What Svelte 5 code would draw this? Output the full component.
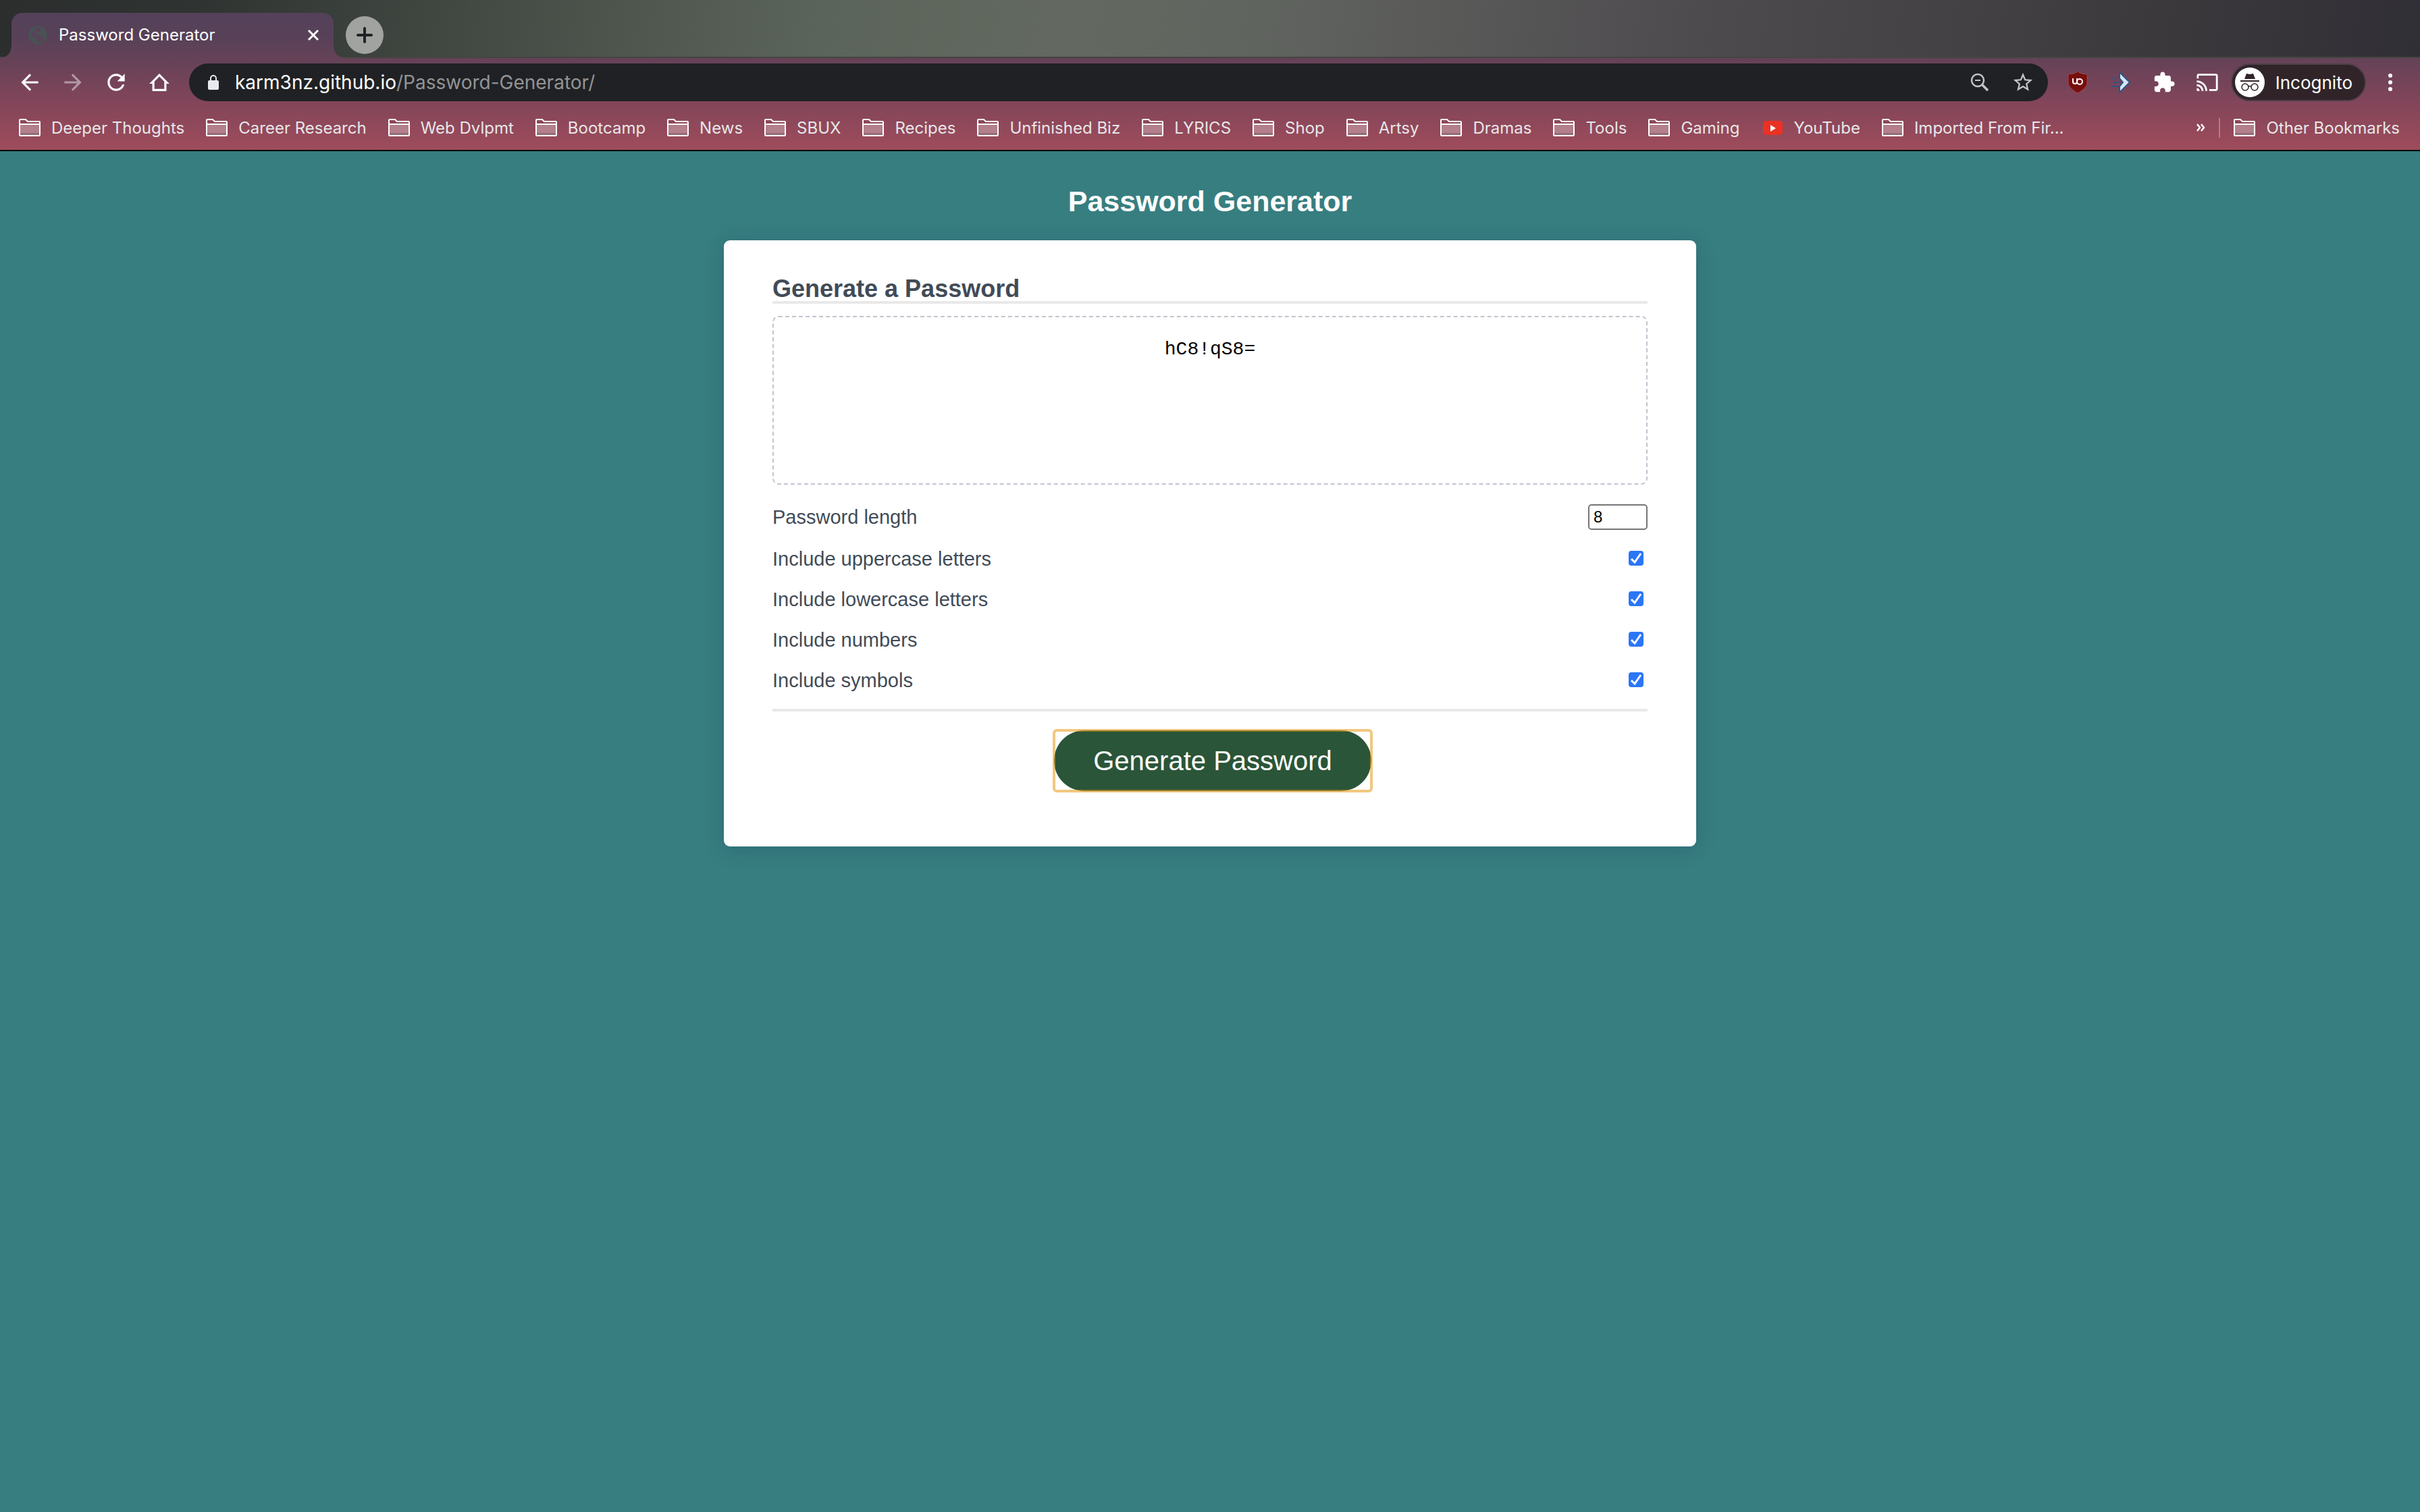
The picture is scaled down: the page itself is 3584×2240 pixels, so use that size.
<script>
  const folders = [
    'Deeper Thoughts', 'Career Research', 'Web Dvlpmt', 'Bootcamp', 'News', 'SBUX',
    'Recipes', 'Unfinished Biz', 'LYRICS', 'Shop', 'Artsy', 'Dramas', 'Tools', 'Gaming',
    'YouTube', 'Imported From Fir...'
  ];
  let options = $state([
    { id: 'uppercase', label: 'Include uppercase letters', on: true },
    { id: 'lowercase', label: 'Include lowercase letters', on: true },
    { id: 'numbers', label: 'Include numbers', on: true },
    { id: 'symbols', label: 'Include symbols', on: true }
  ]);
  let length = $state(8);
</script>

{#snippet folder()}
  <svg class="folder" viewBox="0 0 32 26" aria-hidden="true">
    <rect x="2" y="9" width="28" height="15" fill="#fff" opacity=".3" />
    <rect x="2" y="21" width="28" height="3" fill="#6b5560" opacity=".45" />
    <path d="M1 24V2a1 1 0 0 1 1-1h8l3 3h17a1 1 0 0 1 1 1v19a1 1 0 0 1-1 1H2a1 1 0 0 1-1-1zM1 8h30" fill="none" stroke="#fff" stroke-width="2" />
  </svg>
{/snippet}

<div class="browser">
  <div class="tabstrip">
    <div class="tab">
      <svg class="globe" viewBox="0 0 28 28" aria-hidden="true">
        <circle cx="14" cy="14" r="14" fill="#4b5054" />
        <path d="M14 3c3 0 5 2 4 4s-2 2-4 2-2 2-3 3 1 2 4 2 4 2 4 4 4 1 5-1c-1 4-4 7-8 8-2-1-1-4-3-6s-5-1-6-3l-3-2c0-1 0-3 1-4 2 1 4 1 5-1s-1-3 1-4 1-2 3-2z" fill="#57425a" />
      </svg>
      <span class="tab-title">Password Generator</span>
      <button class="plain" aria-label="Close tab">
        <svg class="close" viewBox="0 0 18 18"><path d="M2 2l14 14M16 2L2 16" stroke="#fff" stroke-width="3" /></svg>
      </button>
    </div>
    <button class="newtab" aria-label="New tab">
      <svg viewBox="0 0 24 24"><path d="M12 2v20M2 12h20" stroke="#202124" stroke-width="4" stroke-linecap="round" /></svg>
    </button>
  </div>

  <div class="chrome">
    <div class="toolbar">
      <nav class="nav">
        <button class="plain" aria-label="Back"><svg viewBox="0 0 24 24"><path fill="#fff" d="M20 11H7.800l5.600-5.600L12 4l-8 8 8 8 1.400-1.400L7.800 13H20z" /></svg></button>
        <button class="plain" aria-label="Forward"><svg class="dim" viewBox="0 0 24 24"><path fill="#fff" d="M4 11h12.200l-5.600-5.600L12 4l8 8-8 8-1.400-1.400L16.200 13H4z" /></svg></button>
        <button class="plain" aria-label="Reload"><svg viewBox="0 0 24 24"><path fill="#fff" d="M17.650 6.350C16.200 4.900 14.210 4 12 4c-4.420 0-7.990 3.580-7.990 8s3.570 8 7.990 8c3.730 0 6.840-2.550 7.730-6h-2.080c-.82 2.330-3.040 4-5.650 4-3.310 0-6-2.690-6-6s2.690-6 6-6c1.660 0 3.140.69 4.220 1.780L13 11h7V4z" /></svg></button>
        <button class="plain" aria-label="Home"><svg viewBox="0 0 24 24"><path fill="none" stroke="#fff" stroke-width="2" d="M6.400 19.200v-7H5L12 5.200l7 7h-1.400v7z" /></svg></button>
      </nav>
      <div class="address">
        <svg class="lock" viewBox="0 0 16 22" aria-hidden="true">
          <rect y="8" width="16" height="14" rx="2" fill="#e8eaed" />
          <path d="M4 9V5a4 4 0 0 1 8 0v4" fill="none" stroke="#e8eaed" stroke-width="2" />
        </svg>
        <span class="url">karm3nz.github.io<span class="path">/Password-Generator/</span></span>
        <button class="plain" aria-label="Zoom"><svg viewBox="0 0 34 34"><circle cx="14" cy="14" r="9" fill="none" stroke="#c3c4c6" stroke-width="2.500" /><path d="M10 14h8" stroke="#c3c4c6" stroke-width="2" /><path d="M20 20l9 9" stroke="#c3c4c6" stroke-width="3.500" /></svg></button>
        <button class="plain" aria-label="Bookmark this page"><svg viewBox="0 0 24 24"><path fill="#c3c4c6" d="M22 9.240l-7.190-.62L12 2 9.190 8.630 2 9.240l5.460 4.730L5.820 21 12 17.270 18.180 21l-1.630-7.030zM12 15.400l-3.760 2.270 1-4.280-3.320-2.880 4.380-.38L12 6.100l1.710 4.040 4.380.38-3.320 2.880 1 4.280z" /></svg></button>
      </div>
      <div class="extensions">
        <button class="plain" aria-label="uBlock Origin"><svg viewBox="0 0 34 34"><path d="M17 1c4 3 9 4 14 4v12c0 7-7 12-14 16C10 29 3 24 3 17V5c5 0 10-1 14-4z" fill="#780f0d" stroke="#97494c" /><path d="M10 11v5a3 3 0 0 0 6 0v-5M16 11v8" fill="none" stroke="#fff" stroke-width="2" /><circle cx="20" cy="16" r="4" fill="none" stroke="#fff" stroke-width="2" /></svg></button>
        <button class="plain" aria-label="Arrow extension"><svg viewBox="0 0 34 34"><path d="M15 2l15 15-15 15v-9l5-6-5-6z" fill="#d5e7fa" stroke="#32547f" stroke-width="2" /><path d="M3 11h6M5 17h11M2 23h12" stroke="#32547f" stroke-width="2" /></svg></button>
        <button class="plain" aria-label="Extensions"><svg viewBox="0 0 24 24"><path fill="#fff" d="M20.500 11H19V7c0-1.100-.9-2-2-2h-4V3.500C13 2.120 11.880 1 10.500 1S8 2.120 8 3.500V5H4c-1.100 0-1.990.9-1.990 2v3.800H3.500c1.490 0 2.700 1.210 2.700 2.700s-1.210 2.700-2.700 2.700H2V20c0 1.100.9 2 2 2h3.800v-1.500c0-1.490 1.210-2.700 2.700-2.700s2.700 1.210 2.700 2.700V22H17c1.100 0 2-.9 2-2v-4h1.500c1.380 0 2.500-1.120 2.500-2.500S21.880 11 20.500 11z" /></svg></button>
        <button class="plain" aria-label="Cast"><svg viewBox="0 0 24 24"><path fill="#fff" d="M21 3H3c-1.100 0-2 .9-2 2v3h2V5h18v14h-7v2h7c1.100 0 2-.9 2-2V5c0-1.100-.9-2-2-2zM1 18v3h3c0-1.660-1.340-3-3-3zm0-4v2c2.760 0 5 2.240 5 5h2c0-3.870-3.130-7-7-7zm0-4v2c4.970 0 9 4.030 9 9h2c0-6.080-4.930-11-11-11z" /></svg></button>
      </div>
      <button class="incognito">
        <svg viewBox="0 0 44 44" aria-hidden="true">
          <circle cx="22" cy="22" r="22" fill="#fff" />
          <path d="M14 17l3-8 5 1 5-1 3 8z" fill="#302429" />
          <path d="M8 20h28" stroke="#302429" stroke-width="2" />
          <circle cx="15" cy="29" r="5" fill="none" stroke="#302429" stroke-width="1.500" />
          <circle cx="29" cy="29" r="5" fill="none" stroke="#302429" stroke-width="1.500" />
          <path d="M20 28q2-1 4 0" fill="none" stroke="#302429" stroke-width="1.500" />
        </svg>
        Incognito
      </button>
      <button class="plain" aria-label="Menu"><svg viewBox="0 0 34 34"><g fill="#fff"><circle cx="17" cy="7" r="3" /><circle cx="17" cy="17" r="3" /><circle cx="17" cy="27" r="3" /></g></svg></button>
    </div>

    <nav class="bookmarks" aria-label="Bookmarks">
      {#each folders as name}
        <a href="#bookmark">
          {#if name === 'YouTube'}
            <svg class="folder" viewBox="0 0 32 26" aria-hidden="true"><rect x="2" y="3" width="29" height="21" rx="5" fill="#ea3223" /><path d="M13 9l8 5-8 5z" fill="#fff" /></svg>
          {:else}
            {@render folder()}
          {/if}
          {name}
        </a>
      {/each}
      <button class="plain more" aria-label="More bookmarks"><svg viewBox="0 0 14 14"><path d="M2 2l4 5-4 5M8 2l4 5-4 5" fill="none" stroke="#fff" stroke-width="2.500" /></svg></button>
      <a class="other" href="#other">{@render folder()}Other Bookmarks</a>
    </nav>
  </div>
</div>

<main>
  <h1>Password Generator</h1>
  <section class="card">
    <h2>Generate a Password</h2>
    <output class="result">hC8!qS8=</output>
    <form onsubmit={(e) => e.preventDefault()}>
      <div class="row">
        <label for="length">Password length</label>
        <input id="length" class="length" type="text" inputmode="numeric" bind:value={length} />
      </div>
      <div class="options">
        {#each options as option}
          <div class="row">
            <label for={option.id}>{option.label}</label>
            <input id={option.id} class="check" type="checkbox" bind:checked={option.on} />
          </div>
        {/each}
      </div>
      <div class="actions">
        <button class="generate" type="submit">Generate Password</button>
      </div>
    </form>
  </section>
</main>

<style>
  :global(body) {
    margin: 0;
    background: #377e80;
  }
  .browser {
    font-family: Inter, "Liberation Sans", sans-serif;
    font-size: 24px;
    color: #e8eaed;
    border-bottom: 2px solid #000;
  }
  .chrome {
    background: linear-gradient(#644257, #82455a 48%, #9f4c5b);
  }
  .tabstrip {
    display: flex;
    align-items: flex-end;
    box-sizing: border-box;
    height: 86px;
    padding-left: 17px;
    border-bottom: 2px solid #434541;
    background: linear-gradient(98deg, #2b2e2d 0%, #2f3331 8%, #3b413c 15%, #4d544c 25%, #5b645a 34%, #636960 44%, #60645f 52%, #595958 60%, #4e4b4f 70%, #454246 80%, #3a383b 90%, #312f36 100%);
  }
  .plain {
    display: grid;
    place-items: center;
    padding: 0;
    border: 0;
    background: none;
  }
  .tab {
    position: relative;
    display: flex;
    align-items: center;
    box-sizing: border-box;
    width: 477px;
    height: 67px;
    margin-bottom: -2px;
    padding: 0 21px 2px 25px;
    border-radius: 16px 16px 0 0;
    background: linear-gradient(#54415a, #574158 50%, #644257);
  }
  .tab::before,
  .tab::after {
    content: "";
    position: absolute;
    bottom: 0;
    width: 16px;
    height: 16px;
  }
  .tab::before {
    right: 100%;
    background: radial-gradient(circle at 0 0, transparent 15px, #624257 16px);
  }
  .tab::after {
    left: 100%;
    background: radial-gradient(circle at 100% 0, transparent 15px, #624257 16px);
  }
  .globe {
    width: 28px;
    height: 28px;
  }
  .tab-title {
    flex: 1;
    padding-left: 17px;
    color: #fff;
  }
  .close {
    width: 18px;
    height: 18px;
  }
  .newtab {
    display: grid;
    place-items: center;
    width: 56px;
    height: 56px;
    margin: 0 0 4px 18px;
    padding: 0;
    border: 0;
    border-radius: 50%;
    background: #a1a3a0;
  }
  .newtab svg {
    width: 24px;
    height: 24px;
  }
  .toolbar {
    display: flex;
    align-items: center;
    padding: 8px 27px 0 25px;
  }
  .toolbar .plain svg {
    display: block;
    width: 34px;
    height: 34px;
  }
  .nav {
    display: flex;
    gap: 26px;
    margin-right: 25px;
  }
  .toolbar .nav svg {
    width: 38px;
    height: 38px;
  }
  .toolbar .dim {
    opacity: .45;
  }
  .address {
    flex: 1;
    display: flex;
    align-items: center;
    gap: 30px;
    height: 56px;
    padding: 0 20px 0 28px;
    border-radius: 28px;
    background: #202124;
  }
  .lock {
    width: 16px;
    height: 22px;
  }
  .url {
    flex: 1;
    margin-left: -6px;
    font-size: 28px;
    color: #fff;
  }
  .path {
    color: #929497;
  }
  .extensions {
    display: flex;
    gap: 30px;
    margin: 0 18px 0 27px;
  }
  .incognito {
    display: flex;
    align-items: center;
    gap: 16px;
    box-sizing: border-box;
    height: 56px;
    margin-right: 19px;
    padding: 0 18px 0 4px;
    border: 2px solid #4d3f49;
    border-radius: 28px;
    background: #302429;
    color: #fff;
    font: 26px Inter, sans-serif;
  }
  .incognito svg {
    width: 44px;
    height: 44px;
  }
  .bookmarks {
    display: flex;
    align-items: center;
    gap: 32px;
    height: 72px;
    padding: 6px 30px 0 28px;
    box-sizing: border-box;
  }
  .bookmarks a {
    display: flex;
    align-items: center;
    gap: 16px;
    color: #e8e6e8;
    text-decoration: none;
    white-space: nowrap;
  }
  .folder {
    width: 32px;
    height: 26px;
  }
  .more {
    margin: 0 -12px 0 auto;
  }
  .more svg {
    width: 14px;
    height: 14px;
  }
  .bookmarks .other {
    padding-left: 20px;
    border-left: 2px solid #b47b88;
  }
  main {
    display: flex;
    flex-direction: column;
    align-items: center;
    padding: 48px 32px;
    font-family: "Liberation Sans", Arial, sans-serif;
    color: #414b57;
  }
  h1 {
    margin: 0 0 32px;
    color: #fcfcfc;
    font-size: 43px;
    line-height: 52px;
  }
  .card {
    box-sizing: border-box;
    width: 100%;
    max-width: 1440px;
    padding: 54px 72px 82px;
    border-radius: 9px;
    background: #fff;
    box-shadow: 0 4px 30px rgba(16, 39, 80, .22);
  }
  h2 {
    margin: 0 0 18px;
    border-bottom: 4px solid #e9e9e9;
    font-size: 36px;
    line-height: 36px;
  }
  .result {
    display: block;
    box-sizing: border-box;
    height: 250px;
    padding: 32px 24px;
    border: 2px dashed #c0c5ce;
    border-radius: 9px;
    color: #000;
    font: 28px/32px "Liberation Mono", monospace;
    text-align: center;
  }
  form {
    padding-top: 18px;
  }
  .row {
    display: flex;
    align-items: center;
    justify-content: space-between;
    height: 60px;
    font-size: 29px;
  }
  .options {
    padding: 2px 0 12px;
  }
  .length {
    box-sizing: border-box;
    width: 88px;
    height: 38px;
    padding: 0 6px;
    border: 2px solid #767676;
    border-radius: 5px;
    color: #000;
    font: 24px "Liberation Sans", sans-serif;
  }
  .check {
    appearance: none;
    width: 22px;
    height: 22px;
    margin: 0 6px 2px 0;
    border-radius: 4px;
    background: #2b76f6 url("data:image/svg+xml,%3Csvg xmlns='http://www.w3.org/2000/svg' viewBox='0 0 22 22'%3E%3Cpath d='M4 12l5 5 9-13' fill='none' stroke='white' stroke-width='3'/%3E%3C/svg%3E");
  }
  .check:not(:checked) {
    border: 2px solid #767676;
    background: #fff;
  }
  .actions {
    display: flex;
    justify-content: center;
    padding: 28px 0 0 8px;
    border-top: 4px solid #e9e9e9;
  }
  .generate {
    position: relative;
    height: 90px;
    padding: 0 58px;
    border: 0;
    border-radius: 45px;
    background: #2a5538;
    color: #fff;
    font: 40px "Liberation Sans", Arial, sans-serif;
  }
  /* focus ring drawn as a rectangle around the pill */
  .generate::after {
    content: "";
    position: absolute;
    inset: -2px;
    border: 4px solid rgba(232, 153, 22, .55);
    border-radius: 6px;
  }
</style>
